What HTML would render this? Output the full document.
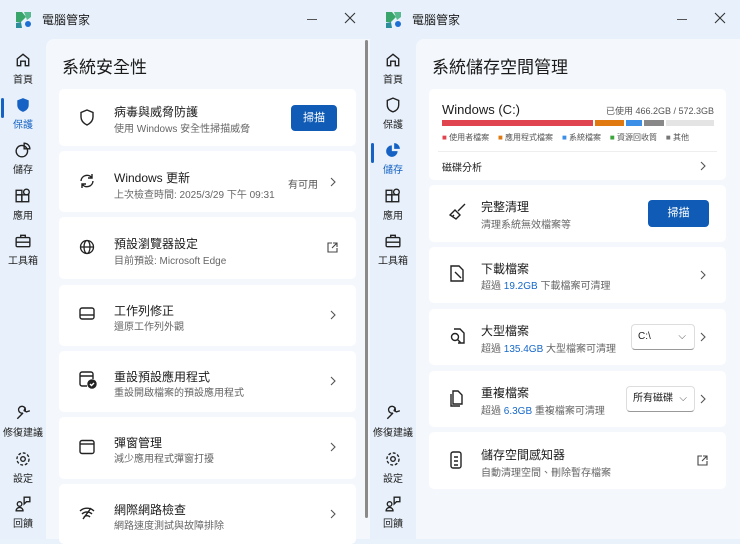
<!DOCTYPE html>
<html><head><meta charset="utf-8"><style>
*{box-sizing:border-box;margin:0;padding:0}
body{width:740px;height:539px;overflow:hidden;background:#e9f2fb;font-family:"Liberation Sans","Noto Sans CJK TC",sans-serif;color:#1b1b1b;position:relative}
.win{position:absolute;top:0;width:370px;height:539px;background:#e8f1fb}
.logo{position:absolute;left:16px;top:12px}
.ttl{position:absolute;left:42px;top:11px;font-size:12px}
.min{position:absolute;left:307px;top:19px;width:10px;height:1px;background:#555}
.cls{position:absolute;left:344px;top:12px}
.panel{position:absolute;left:46px;top:39px;right:0;bottom:0;background:#f4f8fc;border-top-left-radius:8px}
.nav{position:absolute;left:0;width:46px;text-align:center;font-size:10px;color:#222}
.nav svg{display:block;margin:0 auto 3px}
.nav.act{color:#1662c4}
.bar{position:absolute;left:1px;width:3px;height:20px;background:#1662c4;border-radius:2px}
h1{position:absolute;left:16px;top:14px;font-size:17px;font-weight:normal}
.card{position:absolute;left:13px;width:297px;background:#fff;border-radius:5px}
.ic{position:absolute;left:20px}
.t1{position:absolute;left:55px;font-size:12px}
.t2{position:absolute;left:55px;font-size:10px;color:#666}
.chev{position:absolute;right:20px;width:6px;height:10px}
.btn{position:absolute;background:#0f5bb5;color:#fff;font-size:11px;text-align:center;border-radius:4px}
.dd{position:absolute;background:#fff;border:1px solid #ddd;border-bottom-color:#999;border-radius:4px;font-size:10px;padding:0 6px;line-height:24px}
.b{color:#1668c8}
.sb{position:absolute;left:365px;top:40px;width:3px;height:478px;background:#8a8a8a;border-radius:2px}
</style></head><body>
<svg width="0" height="0" style="position:absolute"><defs><symbol id="ch" viewBox="0 0 6 10"><path d="M1 1l4 4-4 4" fill="none" stroke="#555" stroke-width="1.1"/></symbol><symbol id="x" viewBox="0 0 12 12"><path d="M1 1l10 10M11 1L1 11" stroke="#333" stroke-width="1.1"/></symbol></defs></svg>

<!-- LEFT WINDOW -->
<div class="win" style="left:0">
<svg class="logo" width="16" height="16" viewBox="0 0 16 16"><path d="M0 0h6l4 5-5 5H0z" fill="#3aa56a"/><path d="M8 0h7v5l-4 3z" fill="#56b88c"/><path d="M0 11l5-1 1 6H0z" fill="#2b8e9a"/><circle cx="12" cy="12" r="3" fill="#1d6fd3"/></svg>
<div class="ttl">電腦管家</div><div class="min"></div><svg class="cls" width="12" height="12"><use href="#x"/></svg>
<div class="nav" style="top:52px"><svg width="16" height="16" viewBox="0 0 14 14" fill="none" stroke="#222" stroke-width="1.2"><path d="M2 6l5-4 5 4v6H9V8H5v4H2z"/></svg>首頁</div>
<div class="bar" style="top:98px"></div>
<div class="nav act" style="top:97px"><svg width="16" height="16" viewBox="0 0 14 14"><path d="M7 1l5 2v4c0 3-2 5-5 6-3-1-5-3-5-6V3z" fill="#1662c4"/></svg>保護</div>
<div class="nav" style="top:142px"><svg width="16" height="16" viewBox="0 0 14 14" fill="none" stroke="#222" stroke-width="1.2"><circle cx="6" cy="8" r="5"/><path d="M8 1a5 5 0 0 1 5 5H8z"/></svg>儲存</div>
<div class="nav" style="top:188px"><svg width="16" height="16" viewBox="0 0 14 14" fill="none" stroke="#222" stroke-width="1.2"><rect x="1" y="6" width="5" height="6"/><rect x="6" y="6" width="6" height="6"/><rect x="1" y="2" width="5" height="4"/><circle cx="10" cy="3.5" r="2.5"/></svg>應用</div>
<div class="nav" style="top:233px"><svg width="16" height="16" viewBox="0 0 14 14" fill="none" stroke="#222" stroke-width="1.2"><rect x="1" y="4" width="12" height="8" rx="1"/><path d="M5 4V2h4v2M1 8h12"/></svg>工具箱</div>
<div class="nav" style="top:405px"><svg width="16" height="16" viewBox="0 0 14 14" fill="none" stroke="#222" stroke-width="1.2"><path d="M2 12l5-5a3 3 0 1 1 2-2M9 2l-1 3 2 1 3-1"/></svg>修復建議</div>
<div class="nav" style="top:451px"><svg width="16" height="16" viewBox="0 0 14 14" fill="none" stroke="#222" stroke-width="1.2"><circle cx="7" cy="7" r="2"/><circle cx="7" cy="7" r="5.3" stroke-dasharray="2.5 1.6"/></svg>設定</div>
<div class="nav" style="top:496px"><svg width="16" height="16" viewBox="0 0 14 14" fill="none" stroke="#222" stroke-width="1.2"><circle cx="4" cy="7" r="2"/><path d="M1 13a3 3 0 0 1 6 0zM8 1h5v4H10l-2 2z"/></svg>回饋</div>
<div class="panel">
<h1>系統安全性</h1>
<div class="card" style="top:50px;height:57px">
<svg class="ic" style="top:20px" width="16" height="17" viewBox="0 0 16 17" fill="none" stroke="#222" stroke-width="1.4"><path d="M8 1l6 2.5v4.5c0 4-3 6.5-6 8-3-1.5-6-4-6-8V3.5z"/></svg>
<div class="t1" style="top:14px">病毒與威脅防護</div><div class="t2" style="top:31px">使用 Windows 安全性掃描威脅</div>
<div class="btn" style="left:232px;top:16px;width:46px;height:26px;line-height:26px">掃描</div></div>
<div class="card" style="top:112px;height:61px">
<svg class="ic" style="top:22px" width="16" height="16" viewBox="0 0 16 16" fill="none" stroke="#222" stroke-width="1.4"><path d="M2 8a6 6 0 0 1 11-3M14 8a6 6 0 0 1-11 3M13 1v4H9M3 15v-4h4"/></svg>
<div class="t1" style="top:18px">Windows 更新</div><div class="t2" style="top:35px">上次檢查時間: 2025/3/29 下午 09:31</div>
<div style="position:absolute;left:229px;top:25px;font-size:10px;color:#555">有可用</div><svg class="chev" style="top:26px"><use href="#ch"/></svg></div>
<div class="card" style="top:178px;height:62px">
<svg class="ic" style="top:22px" width="16" height="16" viewBox="0 0 16 16" fill="none" stroke="#222" stroke-width="1.3"><circle cx="8" cy="8" r="6.5"/><ellipse cx="8" cy="8" rx="3" ry="6.5"/><path d="M1.5 8h13"/></svg>
<div class="t1" style="top:18px">預設瀏覽器設定</div><div class="t2" style="top:35px">目前預設: Microsoft Edge</div>
<svg style="position:absolute;right:18px;top:25px" width="11" height="11" viewBox="0 0 11 11" fill="none" stroke="#444" stroke-width="1.1"><path d="M5 1H1v9h9V6M6 1h4v4M10 1L5 6"/></svg></div>
<div class="card" style="top:246px;height:61px">
<svg class="ic" style="top:22px" width="16" height="14" viewBox="0 0 16 14" fill="none" stroke="#222" stroke-width="1.4"><rect x="1" y="1" width="14" height="11" rx="2"/><path d="M1 8h14"/></svg>
<div class="t1" style="top:17px">工作列修正</div><div class="t2" style="top:33px">還原工作列外觀</div><svg class="chev" style="top:25px"><use href="#ch"/></svg></div>
<div class="card" style="top:312px;height:61px">
<svg class="ic" style="top:20px" width="18" height="18" viewBox="0 0 18 18" fill="none" stroke="#222" stroke-width="1.4"><path d="M8 15H3a2 2 0 0 1-2-2V3a2 2 0 0 1 2-2h9a2 2 0 0 1 2 2v5M1 5h13"/><circle cx="13" cy="13" r="4" fill="#222"/><path d="M11 13l1.5 1.5L15 12" stroke="#fff"/></svg>
<div class="t1" style="top:17px">重設預設應用程式</div><div class="t2" style="top:33px">重設開啟檔案的預設應用程式</div><svg class="chev" style="top:25px"><use href="#ch"/></svg></div>
<div class="card" style="top:378px;height:62px">
<svg class="ic" style="top:22px" width="16" height="16" viewBox="0 0 16 16" fill="none" stroke="#222" stroke-width="1.4"><rect x="1" y="1.5" width="14" height="13" rx="2"/><path d="M1 5h14"/></svg>
<div class="t1" style="top:17px">彈窗管理</div><div class="t2" style="top:33px">減少應用程式彈窗打擾</div><svg class="chev" style="top:25px"><use href="#ch"/></svg></div>
<div class="card" style="top:445px;height:60px">
<svg class="ic" style="top:22px" width="16" height="14" viewBox="0 0 16 14" fill="none" stroke="#222" stroke-width="1.4"><path d="M1 5a10 10 0 0 1 14 0M3 8a7 7 0 0 1 10 0M5 11a4 4 0 0 1 6 0M4 13L12 2"/></svg>
<div class="t1" style="top:17px">網際網路檢查</div><div class="t2" style="top:33px">網路速度測試與故障排除</div><svg class="chev" style="top:25px"><use href="#ch"/></svg></div>
</div>
<div class="sb"></div>
</div>

<!-- RIGHT WINDOW -->
<div class="win" style="left:370px">
<svg class="logo" width="16" height="16" viewBox="0 0 16 16"><path d="M0 0h6l4 5-5 5H0z" fill="#3aa56a"/><path d="M8 0h7v5l-4 3z" fill="#56b88c"/><path d="M0 11l5-1 1 6H0z" fill="#2b8e9a"/><circle cx="12" cy="12" r="3" fill="#1d6fd3"/></svg>
<div class="ttl">電腦管家</div><div class="min"></div><svg class="cls" width="12" height="12"><use href="#x"/></svg>
<div class="nav" style="top:52px"><svg width="16" height="16" viewBox="0 0 14 14" fill="none" stroke="#222" stroke-width="1.2"><path d="M2 6l5-4 5 4v6H9V8H5v4H2z"/></svg>首頁</div>
<div class="nav" style="top:97px"><svg width="16" height="16" viewBox="0 0 14 14" fill="none" stroke="#222" stroke-width="1.2"><path d="M7 1l5 2v4c0 3-2 5-5 6-3-1-5-3-5-6V3z"/></svg>保護</div>
<div class="bar" style="top:143px"></div>
<div class="nav act" style="top:142px"><svg width="16" height="16" viewBox="0 0 14 14"><path d="M6 3a5 5 0 1 0 5 5H6z" fill="#1662c4"/><path d="M8 1a5 5 0 0 1 5 5H8z" fill="#1662c4"/></svg>儲存</div>
<div class="nav" style="top:188px"><svg width="16" height="16" viewBox="0 0 14 14" fill="none" stroke="#222" stroke-width="1.2"><rect x="1" y="6" width="5" height="6"/><rect x="6" y="6" width="6" height="6"/><rect x="1" y="2" width="5" height="4"/><circle cx="10" cy="3.5" r="2.5"/></svg>應用</div>
<div class="nav" style="top:233px"><svg width="16" height="16" viewBox="0 0 14 14" fill="none" stroke="#222" stroke-width="1.2"><rect x="1" y="4" width="12" height="8" rx="1"/><path d="M5 4V2h4v2M1 8h12"/></svg>工具箱</div>
<div class="nav" style="top:405px"><svg width="16" height="16" viewBox="0 0 14 14" fill="none" stroke="#222" stroke-width="1.2"><path d="M2 12l5-5a3 3 0 1 1 2-2M9 2l-1 3 2 1 3-1"/></svg>修復建議</div>
<div class="nav" style="top:451px"><svg width="16" height="16" viewBox="0 0 14 14" fill="none" stroke="#222" stroke-width="1.2"><circle cx="7" cy="7" r="2"/><circle cx="7" cy="7" r="5.3" stroke-dasharray="2.5 1.6"/></svg>設定</div>
<div class="nav" style="top:496px"><svg width="16" height="16" viewBox="0 0 14 14" fill="none" stroke="#222" stroke-width="1.2"><circle cx="4" cy="7" r="2"/><path d="M1 13a3 3 0 0 1 6 0zM8 1h5v4H10l-2 2z"/></svg>回饋</div>
<div class="panel">
<h1>系統儲存空間管理</h1>
<div class="card" style="top:50px;height:91px">
<div style="position:absolute;left:13px;top:13px;font-size:13px">Windows (C:)</div>
<div style="position:absolute;right:12px;top:15px;font-size:9px;color:#555">已使用 466.2GB / 572.3GB</div>
<div style="position:absolute;left:13px;top:31px;width:272px;height:6px;display:flex;gap:2px">
<div style="width:151px;background:#e0454f"></div><div style="width:29px;background:#e07a10"></div><div style="width:16px;background:#3c8fe6"></div><div style="width:20px;background:#888"></div><div style="flex:1;background:#e4e4e4"></div></div>
<div style="position:absolute;left:13px;top:43px;font-size:8px;color:#555;white-space:nowrap">
<span style="color:#e0454f">■</span> 使用者檔案 &nbsp;&nbsp; <span style="color:#e07a10">■</span> 應用程式檔案 &nbsp;&nbsp; <span style="color:#3c8fe6">■</span> 系統檔案 &nbsp;&nbsp; <span style="color:#3aa53a">■</span> 資源回收筒 &nbsp;&nbsp; <span style="color:#777">■</span> 其他</div>
<div style="position:absolute;left:9px;right:9px;top:62px;height:1px;background:#eee"></div>
<div style="position:absolute;left:13px;top:70px;font-size:10px">磁碟分析</div><svg class="chev" style="top:72px"><use href="#ch"/></svg></div>
<div class="card" style="top:146px;height:57px">
<svg class="ic" style="top:18px" width="18" height="18" viewBox="0 0 18 18" fill="none" stroke="#222" stroke-width="1.4"><path d="M16 1l-7 7M6 7l5 5-4 4-6-4z M3 14l2-2"/></svg>
<div class="t1" style="left:52px;top:13px">完整清理</div><div class="t2" style="left:52px;top:31px">清理系統無效檔案等</div>
<div class="btn" style="left:219px;top:15px;width:61px;height:27px;line-height:27px">掃描</div></div>
<div class="card" style="top:208px;height:56px">
<svg class="ic" style="top:18px" width="16" height="18" viewBox="0 0 16 18" fill="none" stroke="#222" stroke-width="1.4"><path d="M2 1h8l4 4v11H2zM6 7l6 6"/></svg>
<div class="t1" style="left:52px;top:13px">下載檔案</div><div class="t2" style="left:52px;top:30px">超過 <span class="b">19.2GB</span> 下載檔案可清理</div><svg class="chev" style="top:23px"><use href="#ch"/></svg></div>
<div class="card" style="top:270px;height:56px">
<svg class="ic" style="top:18px" width="16" height="18" viewBox="0 0 16 18" fill="none" stroke="#222" stroke-width="1.4"><path d="M5 2h6l4 4v10H9"/><circle cx="6" cy="10" r="3.5"/><path d="M8.5 12.5l3 3"/></svg>
<div class="t1" style="left:52px;top:13px">大型檔案</div><div class="t2" style="left:52px;top:31px">超過 <span class="b">135.4GB</span> 大型檔案可清理</div>
<div class="dd" style="left:202px;top:15px;width:64px;height:26px">C:\<span style="position:absolute;right:8px;color:#555">⌵</span></div><svg class="chev" style="top:23px"><use href="#ch"/></svg></div>
<div class="card" style="top:332px;height:56px">
<svg class="ic" style="top:18px" width="16" height="18" viewBox="0 0 16 18" fill="none" stroke="#222" stroke-width="1.4"><path d="M4 2h5l4 4v9H4zM2 5v12h9"/></svg>
<div class="t1" style="left:52px;top:13px">重複檔案</div><div class="t2" style="left:52px;top:31px">超過 <span class="b">6.3GB</span> 重複檔案可清理</div>
<div class="dd" style="left:197px;top:15px;width:69px;height:26px">所有磁碟<span style="position:absolute;right:7px;color:#555">⌵</span></div><svg class="chev" style="top:23px"><use href="#ch"/></svg></div>
<div class="card" style="top:393px;height:57px">
<svg class="ic" style="top:19px" width="14" height="18" viewBox="0 0 14 18" fill="none" stroke="#222" stroke-width="1.4"><rect x="2" y="1" width="10" height="16" rx="2"/><path d="M5 6h4M5 10h4M5 14h4"/></svg>
<div class="t1" style="left:52px;top:14px">儲存空間感知器</div><div class="t2" style="left:52px;top:32px">自動清理空間、刪除暫存檔案</div>
<svg style="position:absolute;right:18px;top:23px" width="11" height="11" viewBox="0 0 11 11" fill="none" stroke="#444" stroke-width="1.1"><path d="M5 1H1v9h9V6M6 1h4v4M10 1L5 6"/></svg></div>
</div>
</div>
</body></html>
